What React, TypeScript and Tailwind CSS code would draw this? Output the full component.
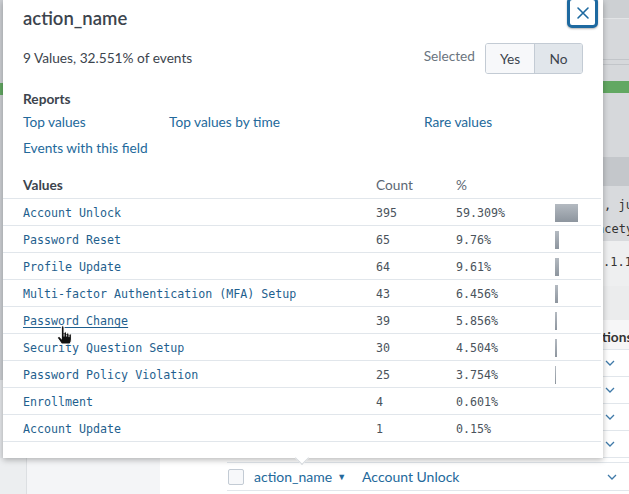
import React from "react";

const ui = { fontFamily: "Lato, 'Open Sans', sans-serif" };
const mono = { fontFamily: "'DejaVu Sans Mono', 'Liberation Mono', monospace" };

interface Row { value: string; count: number; pct: string }

const rows: Row[] = [
  { value: "Account Unlock", count: 395, pct: "59.309%" },
  { value: "Password Reset", count: 65, pct: "9.76%" },
  { value: "Profile Update", count: 64, pct: "9.61%" },
  { value: "Multi-factor Authentication (MFA) Setup", count: 43, pct: "6.456%" },
  { value: "Password Change", count: 39, pct: "5.856%" },
  { value: "Security Question Setup", count: 30, pct: "4.504%" },
  { value: "Password Policy Violation", count: 25, pct: "3.754%" },
  { value: "Enrollment", count: 4, pct: "0.601%" },
  { value: "Account Update", count: 1, pct: "0.15%" },
];

const maxPct = 59.309;

function HandCursor() {
  return (
    <svg width="18" height="20" viewBox="0 0 17 19" className="absolute left-[56px] top-[325px] z-20">
      <path
        d="M5.2 18 L1.8 13 Q1 11.6 2.3 11 Q3.4 10.6 4.2 11.7 L5 12.7 V2.2 Q5 0.8 6.3 0.8 Q7.6 0.8 7.6 2.2 V7.6 Q7.6 6.4 8.8 6.4 Q10 6.4 10 7.6 V8.6 Q10 7.4 11.1 7.4 Q12.3 7.4 12.3 8.6 V9.4 Q12.3 8.3 13.4 8.3 Q14.6 8.3 14.6 9.5 V13.6 Q14.6 16.2 13.2 18 Z"
        fill="#111"
        stroke="#fff"
        strokeWidth="1"
      />
      <path d="M7.6 8 V11 M10 9 V11 M12.3 9.6 V11.5" stroke="#fff" strokeWidth="0.8" />
    </svg>
  );
}

function Popup() {
  return (
    <div className="relative z-10 w-[600px] h-[458px] bg-white shadow-[0_2px_6px_rgba(0,0,0,0.28)] text-[#3c444d]" style={ui}>
      <button className="absolute right-[5px] top-[-3px] w-[31px] h-[31px] rounded-[5px] border-[3px] border-[#1d69a0] bg-white flex items-center justify-center shadow-[0_1px_2px_rgba(0,0,0,0.3)]">
        <svg width="14" height="14" viewBox="0 0 14 14">
          <path d="M2 2 L12 12 M12 2 L2 12" stroke="#1d69a0" strokeWidth="1.6" strokeLinecap="round" />
        </svg>
      </button>

      <div className="h-[38px] pl-5 flex items-center text-[18.5px] font-semibold">action_name</div>

      <div className="mt-[5px] h-[31px] pl-5 pr-[20px] flex items-center">
        <span className="text-[13.7px] flex-1">9 Values, 32.551% of events</span>
        <span className="text-[13.7px] text-[#6b7580] mr-[10px] pb-[4px]">Selected</span>
        <div className="flex h-[31px] border border-[#c3cbd4] rounded-[3px] overflow-hidden text-[13.7px]">
          <div className="w-[49px] flex items-center justify-center bg-[#f7f8fa] border-r border-[#c3cbd4] pt-[2px]">Yes</div>
          <div className="w-[47px] flex items-center justify-center bg-[#e1e6eb] pt-[2px]">No</div>
        </div>
      </div>

      <div className="mt-[15px] pl-5 h-[20px] flex items-center text-[13.7px] font-bold">Reports</div>
      <div className="pl-5 grid grid-cols-[146px_255px_1fr] h-[26px] items-center text-[13.7px] text-[#23699b]">
        <span>Top values</span>
        <span>Top values by time</span>
        <span>Rare values</span>
      </div>
      <div className="pl-5 h-[26px] flex items-center text-[13.7px] text-[#23699b]">Events with this field</div>

      <div className="mt-[12px] mr-[2px]">
        <div className="grid grid-cols-[373px_80px_99px_1fr] h-[26px] items-center border-b border-[#e1e6eb] text-[13.7px]">
          <span className="pl-5 font-bold">Values</span>
          <span className="text-[#5c6773]">Count</span>
          <span className="text-[#5c6773]">%</span>
          <span />
        </div>
        {rows.map((r) => (
          <div key={r.value} className="grid grid-cols-[373px_80px_99px_1fr] h-[27px] items-center border-b border-[#e1e6eb] text-[11.65px]" style={mono}>
            <span className={"pl-5 pt-[4px] text-[#1f5f8e] " + (r.value === "Password Change" ? "underline underline-offset-2" : "")}>{r.value}</span>
            <span className="pt-[4px] text-[#4a535c]">{r.count}</span>
            <span className="pt-[4px] text-[#4a535c]">{r.pct}</span>
            <span className="flex items-center pt-[1px]">
              <span
                className="block h-[18px] bg-gradient-to-b from-[#b4bac1] to-[#8d959e]"
                style={{ width: Math.round((parseFloat(r.pct) / maxPct) * 23) }}
              />
            </span>
          </div>
        ))}
      </div>

      <div className="absolute left-[294px] bottom-[-5px] w-[10px] h-[10px] rotate-45 bg-white border-r border-b border-[#d5d9dd]" />
    </div>
  );
}

function RightColumn() {
  return (
    <div className="w-[26px] h-[458px] overflow-hidden flex flex-col text-[#333]">
      <div className="h-[18px] bg-[#cdd0d3]" />
      <div className="h-[1px] bg-[#e2e4e6]" />
      <div className="h-[41px] bg-[#d6d8db]" />
      <div className="h-[1px] bg-[#c2c5c9]" />
      <div className="h-[4px] bg-[#d6d8db]" />
      <div className="h-[1px] bg-[#c2c5c9]" />
      <div className="h-[16px] bg-[#d6d8db]" />
      <div className="h-[12px] bg-[#62a862]" />
      <div className="h-[65px] bg-[#d6d8db]" />
      <div className="h-[30px] bg-[#c4c7cb]" />
      <div className="h-[55px] bg-[#d8dadd] text-[12px] whitespace-nowrap pt-[7px]" style={mono}>
        <div className="h-[24px] leading-[24px] pl-[1px]">, ju</div>
        <div className="h-[24px] leading-[24px] ml-[-6px]">ncety</div>
      </div>
      <div className="h-[45px] bg-[#eeeff0] text-[12px] leading-[42px] whitespace-nowrap" style={mono}>.1.1</div>
      <div className="h-[35px] bg-[#ebeced]" />
      <div className="h-[30px] bg-[#f6f6f7] border-b border-[#e1e6eb] text-[13.7px] font-bold leading-[34px] whitespace-nowrap ml-[-1px]" style={ui}>
        tions
      </div>
      {[0, 1, 2, 3].map((i) => (
        <div key={i} className="h-[27px] shrink-0 border-b border-[#e1e6eb] bg-white flex items-center pl-[2px]">
          <Chevron />
        </div>
      ))}
    </div>
  );
}

function Chevron() {
  return (
    <svg width="10" height="6" viewBox="0 0 10 6">
      <path d="M1 1 L5 5 L9 1" stroke="#3f79a8" strokeWidth="1.3" fill="none" />
    </svg>
  );
}

function LeftStrip() {
  return (
    <div className="w-[3px] h-[458px] flex flex-col">
      <div className="h-[83px] bg-[#cbced2]" />
      <div className="h-[12px] bg-[#62a862]" />
      <div className="h-[285px] bg-[#cbced2]" />
      <div className="flex-1 bg-[#e4e6e9]" />
    </div>
  );
}

export default function App() {
  return (
    <div className="w-[629px] h-[494px] overflow-hidden relative bg-white" style={ui}>
      <div className="flex">
        <LeftStrip />
        <Popup />
        <RightColumn />
      </div>
      <div className="flex h-[36px]">
        <div className="w-[27px] bg-[#eceef0] border-r border-[#dcdfe2]" />
        <div className="w-[133px] bg-[#f4f5f7]" />
        <div className="w-[67px] bg-white" />
        <div className="flex-1 flex flex-col">
          <div className="h-[4px]" />
          <div className="h-[29px] border-y border-[#e1e6eb] flex items-center text-[14px]">
            <span className="w-[16px] h-[16px] ml-[1px] border border-[#c3cbd4] rounded-[2px] bg-[#f7f8fa]" />
            <span className="ml-[10px] text-[#23699b]">action_name</span>
            <span className="ml-[5px] text-[9px] text-[#23699b]">▼</span>
            <span className="ml-[16px] text-[#23699b] flex-1">Account Unlock</span>
            <span className="mr-[12px] flex"><Chevron /></span>
          </div>
        </div>
      </div>
      <HandCursor />
    </div>
  );
}
